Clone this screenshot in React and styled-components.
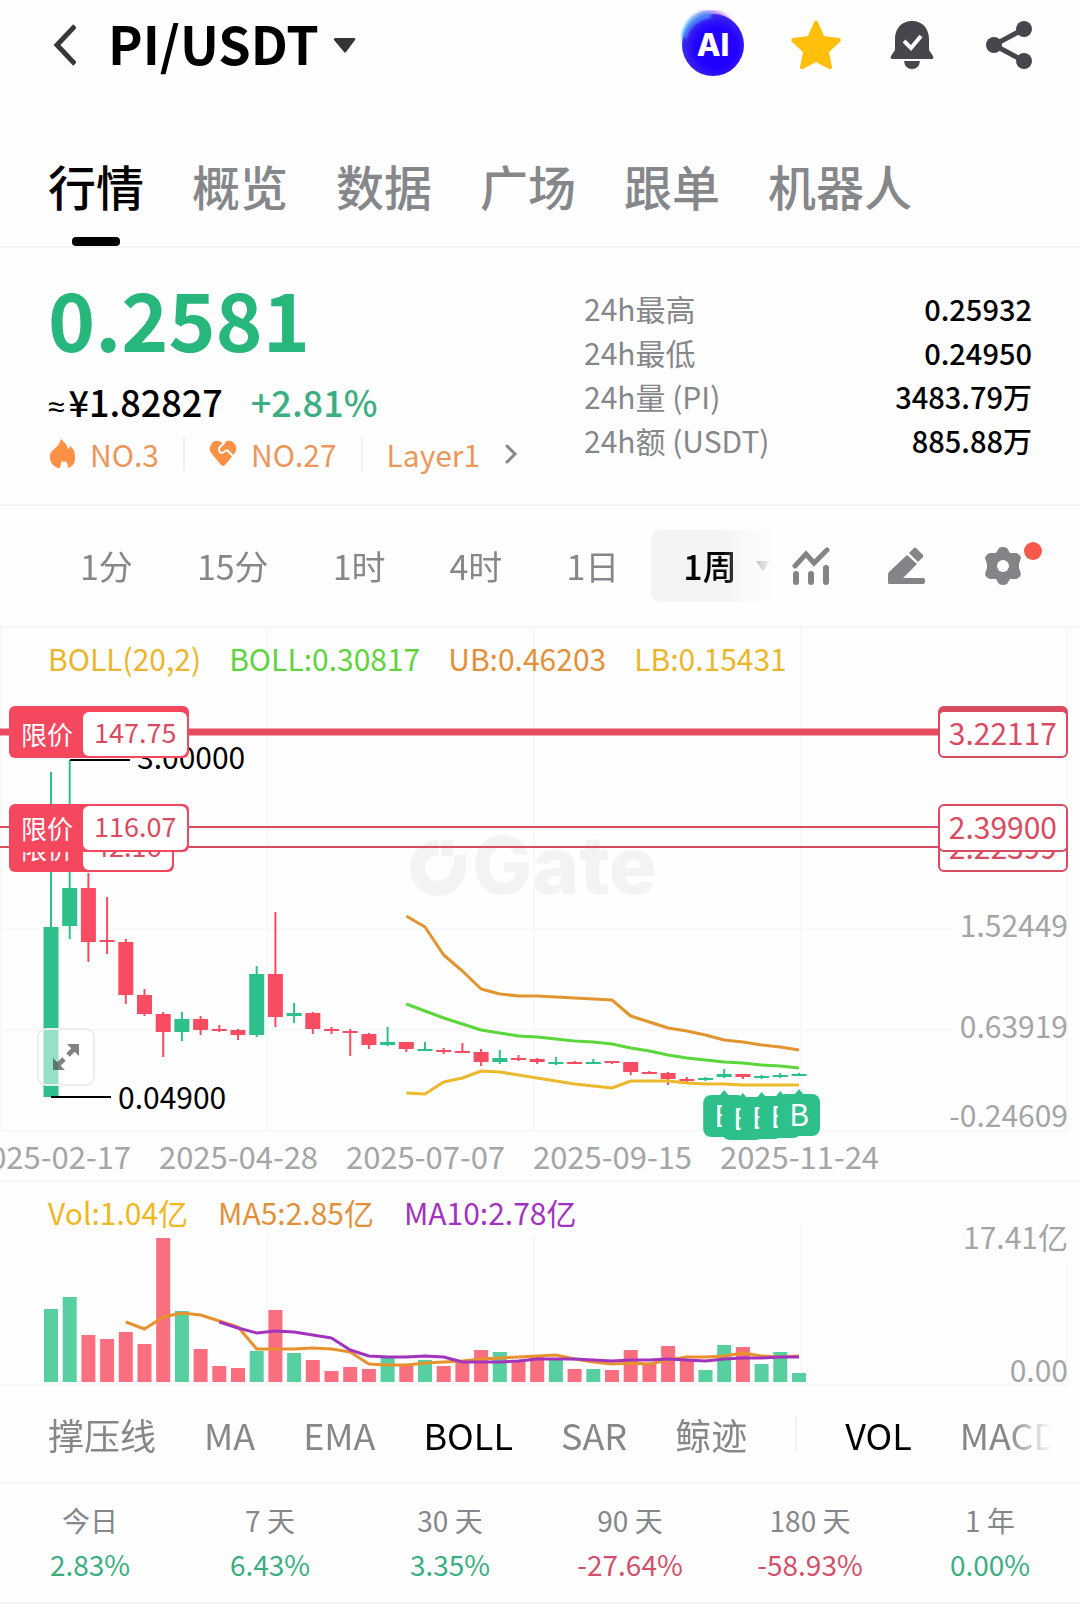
import React, { useState } from "react";
import styled, { createGlobalStyle, css } from "styled-components";

const UP = "#2dc08a";
const DOWN = "#f5485e";
const ORDER = "#d94b60";

const tabs = ["行情", "概览", "数据", "广场", "跟单", "机器人"];

const stats = [
    { label: "24h最高", value: "0.25932" },
    { label: "24h最低", value: "0.24950" },
    { label: "24h量 (PI)", value: "3483.79万" },
    { label: "24h额 (USDT)", value: "885.88万" },
];

const frames = ["1分", "15分", "1时", "4时", "1日", "1周"];

const dates = ["2025-02-17", "2025-04-28", "2025-07-07", "2025-09-15", "2025-11-24"];

const overlays = ["撑压线", "MA", "EMA", "BOLL", "SAR", "鲸迹"];
const subCharts = ["VOL", "MACD"];

const performance = [
    { label: "今日", value: "2.83%" },
    { label: "7 天", value: "6.43%" },
    { label: "30 天", value: "3.35%" },
    { label: "90 天", value: "-27.64%" },
    { label: "180 天", value: "-58.93%" },
    { label: "1 年", value: "0.00%" },
];

// direction, high, body top, body bottom, low
const candles = [
    ["u", 144, 299, 469, 469], ["u", 132, 260, 298, 311], ["d", 245, 260, 314, 334],
    ["d", 269, 312, 314, 326], ["d", 311, 314, 367, 376], ["d", 361, 367, 386, 388],
    ["d", 384, 386, 404, 429], ["u", 384, 391, 404, 413], ["d", 388, 391, 402, 407],
    ["d", 397, 401, 403, 404], ["d", 401, 402, 407, 412], ["u", 338, 346, 407, 409],
    ["d", 284, 346, 389, 399], ["u", 375, 385, 388, 395], ["d", 384, 385, 401, 406],
    ["d", 399, 401, 402, 406], ["d", 401, 403, 405, 428], ["d", 405, 406, 417, 421],
    ["u", 399, 414, 417, 418], ["d", 414, 414, 421, 424], ["u", 414, 421, 422, 423],
    ["d", 420, 422, 423, 426], ["d", 415, 423, 425, 425], ["d", 421, 424, 434, 438],
    ["u", 422, 430, 434, 436], ["d", 427, 430, 431, 433], ["d", 430, 431, 434, 436],
    ["u", 429, 434, 435, 437], ["d", 433, 434, 435, 436], ["u", 431, 434, 435, 436],
    ["d", 433, 433, 435, 436], ["d", 434, 434, 444, 447], ["d", 443, 444, 445, 446],
    ["d", 444, 445, 451, 457], ["d", 449, 451, 452, 454], ["u", 449, 450, 451, 453],
    ["u", 441, 446, 449, 450], ["d", 446, 446, 449, 451], ["u", 447, 448, 450, 451],
    ["u", 445, 447, 449, 450], ["u", 445, 446, 447, 448],
];

const volumes = [
    127, 115, 153, 157, 150, 162, 56, 129, 167, 184, 186, 169, 128, 171, 178, 189, 185, 187, 175, 184, 178,
    184, 180, 168, 170, 179, 175, 178, 187, 187, 188, 168, 182, 164, 179, 188, 163, 165, 182, 170, 191,
];

const upper = [288, 299, 327, 343, 361, 366, 368, 368, 369, 370, 371, 372, 388, 394, 400, 403, 407, 412, 414, 417, 419, 422];
const middle = [376, 383, 390, 396, 402, 405, 408, 409, 411, 413, 414, 416, 420, 423, 427, 430, 432, 434, 435, 437, 438, 440];
const lower = [465, 466, 454, 450, 443, 444, 447, 450, 453, 456, 458, 460, 453, 453, 453, 455, 456, 456, 457, 457, 457, 457];
const ma5 = [
    140, 147, 135, 131, 133, 139, 145, 167, 167, 167, 166, 167, 170, 182, 183, 183, 181, 180, 179,
    177, 176, 175, 174, 173, 177, 180, 182, 181, 182, 178, 175, 175, 174, 171, 174, 175, 174,
];
const ma10 = [
    140, 146, 151, 149, 150, 153, 156, 168, 174, 175, 175, 174, 175, 180, 180, 180,
    179, 177, 177, 177, 178, 179, 178, 178, 177, 178, 179, 177, 176, 176, 175, 175,
];

const buys = [
    [36, 462], [37, 465], [38, 464], [39, 463], [40, 461],
];

// later orders are painted over earlier ones
const orders = [
    { top: 82, amount: "147.75", price: "3.22117", stacked: true },
    { top: 196, amount: "42.16", price: "2.22399" },
    { top: 176, amount: "116.07", price: "2.39900" },
];

const xAt = (i) => 51 + i * 18.7;
const line = (values, start) => values.map((y, i) => `${xAt(start + i)},${y}`).join(" ");

export default function App() {
    const [tab, setTab] = useState("行情");
    const [frame, setFrame] = useState("1周");
    const [active, setActive] = useState(["BOLL", "VOL"]);

    const toggle = (name) =>
        setActive(active.includes(name) ? active.filter((n) => n !== name) : [...active, name]);

    return (
        <>
            <GlobalStyle />
            <Header>
                <BackButton aria-label="返回"><BackIcon /></BackButton>
                <PairButton>
                    <Pair>PI/USDT</Pair>
                    <svg width="24" height="18" viewBox="0 0 24 18" aria-hidden="true">
                        <path d="M3 2h18q2 0 1 2l-9 12q-1 1-2 0L1 4q-1-2 2-2z" fill="#333436" />
                    </svg>
                </PairButton>
                <HeaderActions>
                    <IconButton $width={64} aria-label="AI"><AiIcon /></IconButton>
                    <IconButton $width={48} aria-label="收藏"><StarIcon /></IconButton>
                    <IconButton $width={48} aria-label="提醒"><BellIcon /></IconButton>
                    <IconButton $width={48} aria-label="分享"><ShareIcon /></IconButton>
                </HeaderActions>
            </Header>

            <Tabs>
                {tabs.map((name) => (
                    <Tab key={name} $active={name === tab} onClick={() => setTab(name)}>{name}</Tab>
                ))}
            </Tabs>

            <Summary>
                <div>
                    <Price>0.2581</Price>
                    <Fiat>
                        <span><Approx>≈</Approx>¥1.82827</span>
                        <Change>+2.81%</Change>
                    </Fiat>
                    <Tags>
                        <Tag href="#hot"><FlameIcon />NO.3</Tag>
                        <Rule />
                        <Tag href="#favorite"><HeartIcon />NO.27</Tag>
                        <Rule />
                        <Tag href="#layer1">Layer1</Tag>
                        <MoreButton aria-label="更多">
                            <svg width="14" height="22" viewBox="0 0 14 22">
                                <path d="M3 3l8 8-8 8" fill="none" stroke="#85878a" strokeWidth="3" strokeLinecap="round" />
                            </svg>
                        </MoreButton>
                    </Tags>
                </div>
                <Stats>
                    {stats.map((s) => (
                        <Stat key={s.label}>
                            <dt>{s.label}</dt>
                            <dd>{s.value}</dd>
                        </Stat>
                    ))}
                </Stats>
            </Summary>

            <Toolbar>
                <Frames>
                    {frames.map((name) => (
                        <Frame key={name} $active={name === frame} onClick={() => setFrame(name)}>
                            {name}
                            {name === "1周" && (
                                <svg width="16" height="12" viewBox="0 0 16 12" aria-hidden="true">
                                    <path d="M1 1h14l-6 9q-1 1-2 0z" fill="#55575a" />
                                </svg>
                            )}
                        </Frame>
                    ))}
                </Frames>
                <Tools>
                    <IconButton $width={38} aria-label="指标"><IndicatorIcon /></IconButton>
                    <IconButton $width={38} aria-label="画图"><PencilIcon /></IconButton>
                    <IconButton $width={38} aria-label="设置"><GearIcon /><Dot /></IconButton>
                </Tools>
            </Toolbar>

            <ChartPanel>
                <PriceChart />
                <Legend $gap={28}>
                    <Key $color="#ecb62c">BOLL(20,2)</Key>
                    <Key $color="#5fd43f">BOLL:0.30817</Key>
                    <Key $color="#e2913a">UB:0.46203</Key>
                    <Key $color="#ecb62c">LB:0.15431</Key>
                </Legend>
                {orders.map((o) => (
                    <React.Fragment key={o.top}>
                        <OrderTag $stacked={o.stacked} style={{ top: o.top }}>
                            限价
                            <OrderAmount>{o.amount}</OrderAmount>
                        </OrderTag>
                        <OrderPrice $stacked={o.stacked} style={{ top: o.top }}>{o.price}</OrderPrice>
                    </React.Fragment>
                ))}
                <ExpandButton aria-label="全屏"><ExpandIcon /></ExpandButton>
            </ChartPanel>
            <Dates>
                {dates.map((d) => <time key={d} dateTime={d}>{d}</time>)}
            </Dates>

            <ChartPanel>
                <VolumeChart />
                <Legend $gap={30}>
                    <Key $color="#f0b71f">Vol:1.04亿</Key>
                    <Key $color="#e2913a">MA5:2.85亿</Key>
                    <Key $color="#a233bd">MA10:2.78亿</Key>
                </Legend>
            </ChartPanel>

            <Indicators>
                <IndicatorList>
                    {overlays.map((name) => (
                        <Indicator key={name} $active={active.includes(name)} onClick={() => toggle(name)}>{name}</Indicator>
                    ))}
                    <Rule />
                    {subCharts.map((name) => (
                        <Indicator key={name} $active={active.includes(name)} onClick={() => toggle(name)}>{name}</Indicator>
                    ))}
                </IndicatorList>
            </Indicators>

            <Performance>
                {performance.map((p) => (
                    <Period key={p.label} $down={p.value.startsWith("-")}>
                        <dt>{p.label}</dt>
                        <dd>{p.value}</dd>
                    </Period>
                ))}
            </Performance>
        </>
    );
}

function PriceChart() {
    return (
        <Chart viewBox="0 0 1080 504" role="img" aria-label="K线图">
            <g stroke="#f7f8f9" strokeWidth="2">
                <path d="M1 0V504M267 0V504M534 0V504M801 0V504M1067 0V504" />
                <path d="M0 301H955M0 402H955M0 503H1067" />
            </g>

            {/* watermark */}
            <g fill="#f2f4f4">
                <path d="M438 212a28 28 0 1 0 28 28h-15a13 13 0 1 1-13-13z" />
                <path d="M441 212h12v15h13v13h-12v-12h-13z" />
                <text x="472" y="266" fontFamily="Inter, sans-serif" fontWeight="800" fontSize="80">Gate</text>
            </g>

            {candles.map(([dir, high, top, bottom, low], i) => (
                <g key={i} fill={dir === "u" ? UP : "#f74c61"}>
                    <rect x={xAt(i) - 1} y={high} width="2" height={low - high} />
                    <rect x={xAt(i) - 7.5} y={top} width="15" height={Math.max(bottom - top, 2)} />
                </g>
            ))}

            <g fill="none" strokeWidth="3" strokeLinejoin="round">
                <polyline points={line(upper, 19)} stroke="#e2942f" />
                <polyline points={line(middle, 19)} stroke="#5bd63b" />
                <polyline points={line(lower, 19)} stroke="#ecb92d" />
            </g>

            <path d="M70 132H130M51 469H111" stroke="#000" strokeWidth="2" />
            <text x="137" y="141">3.00000</text>
            <text x="118" y="481">0.04900</text>

            <g stroke={ORDER}>
                <path d="M0 104H1000" strokeWidth="7" stroke="#e74b5f" />
                <path d="M0 199H1000M0 219H1000" strokeWidth="2" />
            </g>

            {buys.map(([i, y]) => (
                <g key={i} transform={`translate(${xAt(i)} ${y})`}>
                    <path d="M-5 6L0 0L5 6z" fill={UP} />
                    <rect x="-21" y="5" width="42" height="42" rx="8" fill={UP} />
                    <text y="37" textAnchor="middle" fill="#fff">B</text>
                </g>
            ))}

            <g fill="#a3a5a7" textAnchor="end">
                <text x="1068" y="309">1.52449</text>
                <text x="1068" y="410">0.63919</text>
                <text x="1068" y="499">-0.24609</text>
            </g>
        </Chart>
    );
}

function VolumeChart() {
    return (
        <Chart viewBox="0 0 1080 204" role="img" aria-label="成交量">
            <path d="M267 52V204M534 52V204M801 42V204M1067 80V204M0 203H1067" stroke="#f7f8f9" strokeWidth="2" />
            {volumes.map((top, i) => (
                <rect
                    key={i}
                    x={xAt(i) - 7}
                    y={top}
                    width="14"
                    height={200 - top}
                    fill={candles[i][0] === "u" ? "#58cfa1" : "#fa6f80"}
                />
            ))}
            <g fill="none" strokeWidth="3" strokeLinejoin="round">
                <polyline points={line(ma5, 4)} stroke="#e8922f" />
                <polyline points={line(ma10, 9)} stroke="#a233bd" />
            </g>
            <g fill="#a3a5a7" textAnchor="end">
                <text x="1068" y="67">17.41亿</text>
                <text x="1068" y="200">0.00</text>
            </g>
        </Chart>
    );
}

const BackIcon = () => (
    <svg width="28" height="44" viewBox="0 0 28 44">
        <path d="M27 3L9 22l18 19" fill="none" stroke="#36373a" strokeWidth="5" />
    </svg>
);

const AiIcon = () => (
    <svg width="64" height="70" viewBox="0 0 64 70">
        <defs>
            <radialGradient id="aiBall" cx="0.55" cy="0.55" r="0.55">
                <stop offset="0.6" stopColor="#2200ff" />
                <stop offset="1" stopColor="#3f2bea" />
            </radialGradient>
            <linearGradient id="aiGlow" x1="0" y1="0.4" x2="1" y2="0">
                <stop offset="0" stopColor="#5cd0fb" />
                <stop offset="0.45" stopColor="#7f8cf5" />
                <stop offset="0.8" stopColor="#e08cf8" />
                <stop offset="1" stopColor="#fff" />
            </linearGradient>
            <filter id="aiSoft"><feGaussianBlur stdDeviation="1.5" /></filter>
        </defs>
        <circle cx="30" cy="28" r="28" fill="url(#aiGlow)" filter="url(#aiSoft)" />
        <circle cx="33" cy="35" r="31" fill="url(#aiBall)" />
        <path d="M4 28Q9 9 31 5" fill="none" stroke="#4f9cff" strokeWidth="5" opacity="0.8" filter="url(#aiSoft)" />
        <text x="33" y="46" textAnchor="middle" fontFamily="Inter, sans-serif" fontSize="31" fontWeight="800" fill="#fff">AI</text>
    </svg>
);

const StarIcon = () => (
    <svg width="50" height="50" viewBox="0 0 50 50">
        <path
            d="M23 2q2-3 4 0l6 14 15 2q3 1 1 4L38 32l3 15q0 3-3 2l-13-7-13 7q-3 1-3-2l3-15L1 22q-2-3 1-4l15-2z"
            fill="#ffbf0b"
        />
    </svg>
);

const BellIcon = () => (
    <svg width="44" height="50" viewBox="0 0 44 50">
        <path d="M22 1C11 1 5 9 5 19v11L1 36q-1 3 1 3h40q2 0 1-3l-4-6V19C39 9 33 1 22 1z" fill="#45474c" />
        <path d="M14 41h16q-1 8-8 8t-8-8z" fill="#45474c" />
        <path d="M14 21l7 7 10-12" fill="none" stroke="#fff" strokeWidth="4" />
    </svg>
);

const ShareIcon = () => (
    <svg width="48" height="50" viewBox="0 0 48 50">
        <path d="M40 9L10 25l30 16" fill="none" stroke="#45474c" strokeWidth="5" />
        <g fill="#45474c">
            <circle cx="40" cy="9" r="8" />
            <circle cx="10" cy="25" r="8" />
            <circle cx="40" cy="41" r="8" />
        </g>
    </svg>
);

const FlameIcon = () => (
    <svg width="28" height="30" viewBox="0 0 28 30">
        <path
            d="M13 0c3 3 6 5 7 10q2 0 2-4c1 1 1 3 3 4 2 3 2 6 2 9 0 5-2 8-7 10 0-4-1-6-3-7-1 2-2 0-3 0-2 3-1 5-2 7-4 0-6-2-8-4-2-3-2-6-2-9C3 10 11 9 13 0z"
            fill="#fc9145"
        />
    </svg>
);

const HeartIcon = () => (
    <svg width="28" height="28" viewBox="0 0 28 28">
        <path d="M14 4c3-4 8-4 11-1 3 4 3 8 0 11L16 25q-2 2-4 0L3 14C0 11 0 7 3 3c3-3 8-3 11 1z" fill="#fc9145" />
        <path d="M16 2l-6 6q0 5 3 5l5-3 6 6" fill="none" stroke="#fff" strokeWidth="2" strokeLinejoin="round" />
    </svg>
);

const IndicatorIcon = () => (
    <svg width="38" height="40" viewBox="0 0 38 40" stroke="#828488" strokeLinecap="round" fill="none">
        <path d="M3 20L14 8l8 9L35 4" strokeWidth="5" strokeLinejoin="miter" />
        <path d="M4 28v8M19 28v8M34 22v14" strokeWidth="6" />
    </svg>
);

const PencilIcon = () => (
    <svg width="38" height="38" viewBox="0 0 38 38" fill="#828488">
        <path d="M1 37q-1 0-1-2v-7q0-2 1-3L19 8l10 9-14 14h20q2 0 2 2v2q0 2-2 2z" />
        <path d="M21 6l5-5q1-1 2 0l7 7q1 1 0 2l-5 5z" />
    </svg>
);

const GearIcon = () => (
    <svg width="38" height="40" viewBox="0 0 38 40">
        <path
            d="M15 2q4-2 8 0l3 5 6 0q4 1 5 5l-2 6v4l2 6q-1 4-5 5h-6l-3 5q-4 2-8 0l-3-5H6q-4-1-5-5l2-6v-4l-2-6q1-4 5-5l6 0z"
            fill="#828488"
        />
        <circle cx="19" cy="20" r="6" fill="#fff" />
    </svg>
);

const ExpandIcon = () => (
    <svg width="30" height="30" viewBox="0 0 30 30" fill="#3d4143" opacity="0.65">
        <path d="M16 2h12v12zM14 28H2V16z" />
        <path d="M25 5l-8 8M13 17l-8 8" stroke="#3d4143" strokeWidth="5" />
    </svg>
);

const GlobalStyle = createGlobalStyle`
    * {
        box-sizing: border-box;
    }
    body {
        margin: 0;
        background: #fefefe;
        color: #000;
        font-family: "Noto Sans CJK SC", "Noto Sans", sans-serif;
        font-size: 30px;
        overflow-x: hidden;
    }
    button {
        padding: 0;
        border: 0;
        background: none;
        color: inherit;
        font: inherit;
        cursor: pointer;
    }
    dl, dd, h1 {
        margin: 0;
    }
    svg {
        display: block;
        flex-shrink: 0;
    }
`;

const Header = styled.header`
    display: flex;
    align-items: center;
    height: 90px;
    padding: 0 48px;
`;

const BackButton = styled.button`
    margin-right: 32px;
`;

const PairButton = styled.button`
    display: flex;
    align-items: center;
    gap: 14px;
`;

const Pair = styled.h1`
    font-size: 52px;
    line-height: 64px;
    padding-bottom: 4px;
    font-weight: 700;
`;

const HeaderActions = styled.div`
    display: flex;
    align-items: center;
    gap: 48px;
    margin-left: auto;
`;

const IconButton = styled.button`
    position: relative;
    display: flex;
    justify-content: center;
    width: ${(p) => p.$width}px;
`;

const Tabs = styled.nav`
    display: flex;
    align-items: flex-end;
    gap: 48px;
    height: 158px;
    padding: 0 48px;
    border-bottom: 2px solid #f4f4f5;
`;

const Tab = styled.button`
    display: flex;
    flex-direction: column;
    align-items: center;
    gap: 20px;
    color: ${(p) => (p.$active ? "#000" : "#85878a")};
    font-size: 48px;
    font-weight: 500;
    line-height: 64px;
    white-space: nowrap;

    &::after {
        content: "";
        width: 48px;
        height: 9px;
        border-radius: 4px;
        background: ${(p) => (p.$active ? "#000" : "transparent")};
    }
`;

const Summary = styled.section`
    display: grid;
    grid-template-columns: 1fr 448px;
    padding: 30px 48px;
    border-bottom: 2px solid #f4f4f5;
`;

const Price = styled.div`
    color: #27b77d;
    font-size: 80px;
    font-weight: 700;
    line-height: 78px;
`;

const Fiat = styled.div`
    display: flex;
    gap: 28px;
    height: 46px;
    margin-top: 22px;
    font-size: 36px;
    font-weight: 500;
    line-height: 46px;
`;

const Approx = styled.span`
    margin-right: 4px;
    font-family: "Liberation Sans", sans-serif;
    font-size: 30px;
    line-height: 30px;
`;

const Change = styled.span`
    color: #3bae82;
`;

const Tags = styled.div`
    display: flex;
    align-items: center;
    gap: 24px;
    margin-top: 10px;
`;

const Tag = styled.a`
    display: flex;
    align-items: center;
    gap: 14px;
    color: #ec975a;
    font-size: 30px;
    line-height: 40px;
    text-decoration: none;
`;

const Rule = styled.span`
    flex-shrink: 0;
    width: 2px;
    height: 34px;
    background: #f1f1f2;
`;

const MoreButton = styled.button`
    display: flex;
`;

const Stats = styled.dl`
    padding-top: 8px;
`;

const Stat = styled.div`
    display: flex;
    justify-content: space-between;
    line-height: 44px;

    dt {
        color: #85878a;
    }
    dd {
        font-size: 29px;
        font-weight: 500;
    }
`;

const Toolbar = styled.div`
    display: flex;
    align-items: center;
    padding: 24px 58px 24px 48px;
    border-bottom: 2px solid #f4f4f5;
`;

const Frames = styled.div`
    display: flex;
    flex: 1;
    min-width: 0;
    overflow: hidden;
    mask-image: linear-gradient(to right, #000 calc(100% - 52px), transparent);
`;

const Frame = styled.button`
    display: flex;
    flex-shrink: 0;
    align-items: center;
    gap: 18px;
    height: 72px;
    padding: 0 32px;
    border-radius: 9px;
    color: #85878a;
    font-size: 34px;
    line-height: 68px;
    ${(p) =>
        p.$active &&
        css`
            background: #f2f4f6;
            color: #000;
            font-weight: 500;
        `}
`;

const Tools = styled.div`
    display: flex;
    align-items: center;
    gap: 58px;
    margin-left: 18px;
`;

const Dot = styled.span`
    position: absolute;
    top: -4px;
    right: -20px;
    width: 18px;
    height: 18px;
    border-radius: 50%;
    background: #f8594b;
`;

const ChartPanel = styled.section`
    position: relative;
`;

const Chart = styled.svg`
    width: 100%;
    height: auto;
    overflow: visible;
    font-size: 30px;
`;

const Legend = styled.div`
    position: absolute;
    top: 10px;
    left: 48px;
    display: flex;
    gap: ${(p) => p.$gap}px;
    line-height: 40px;
`;

const Key = styled.span`
    color: ${(p) => p.$color};
`;

const OrderTag = styled.button`
    position: absolute;
    left: 9px;
    display: flex;
    align-items: center;
    gap: 10px;
    height: 48px;
    padding: 2px 2px 2px 12px;
    border-radius: 6px;
    background: ${DOWN};
    box-shadow: ${(p) => (p.$stacked ? `0 -4px 0 ${DOWN}` : "none")};
    color: #fff;
    font-size: 26px;
    line-height: 40px;
`;

const OrderAmount = styled.span`
    height: 44px;
    padding: 0 11px;
    border-radius: 6px;
    background: #fff;
    color: ${ORDER};
    font-size: 27px;
`;

const OrderPrice = styled.span`
    position: absolute;
    right: 12px;
    height: 48px;
    padding: 0 9px;
    border: 2px solid ${ORDER};
    border-radius: 6px;
    background: #fff;
    box-shadow: ${(p) => (p.$stacked ? `0 -4px 0 ${ORDER}` : "none")};
    color: ${ORDER};
    line-height: 40px;
`;

const ExpandButton = styled.button`
    position: absolute;
    bottom: 46px;
    left: 37px;
    display: flex;
    align-items: center;
    justify-content: center;
    width: 58px;
    height: 58px;
    border: 2px solid #ebecec;
    border-radius: 9px;
    background: rgba(255, 255, 255, 0.5);
`;

const Dates = styled.div`
    display: flex;
    height: 50px;
    margin-left: -42px;
    border-bottom: 2px solid #f4f4f5;
    color: #a3a5a7;
    font-size: 31px;
    line-height: 48px;

    time {
        width: 187px;
        text-align: center;
    }
`;

const Indicators = styled.div`
    padding: 0 28px 0 48px;
    border-bottom: 2px solid #f4f4f5;
`;

const IndicatorList = styled.div`
    display: flex;
    align-items: center;
    gap: 48px;
    height: 96px;
    overflow: hidden;
    mask-image: linear-gradient(to right, #000 calc(100% - 44px), transparent);
`;

const Indicator = styled.button`
    flex-shrink: 0;
    color: ${(p) => (p.$active ? "#000" : "#85878a")};
    font-size: 36px;
    line-height: 48px;
`;

const Performance = styled.dl`
    display: grid;
    grid-template-columns: repeat(6, 1fr);
    padding: 14px 0 16px;
    border-bottom: 2px solid #f4f4f5;
    font-size: 28px;
    line-height: 44px;
    text-align: center;
`;

const Period = styled.div`
    dt {
        color: #85878a;
    }
    dd {
        color: ${(p) => (p.$down ? "#d3506a" : "#3bae82")};
    }
`;
